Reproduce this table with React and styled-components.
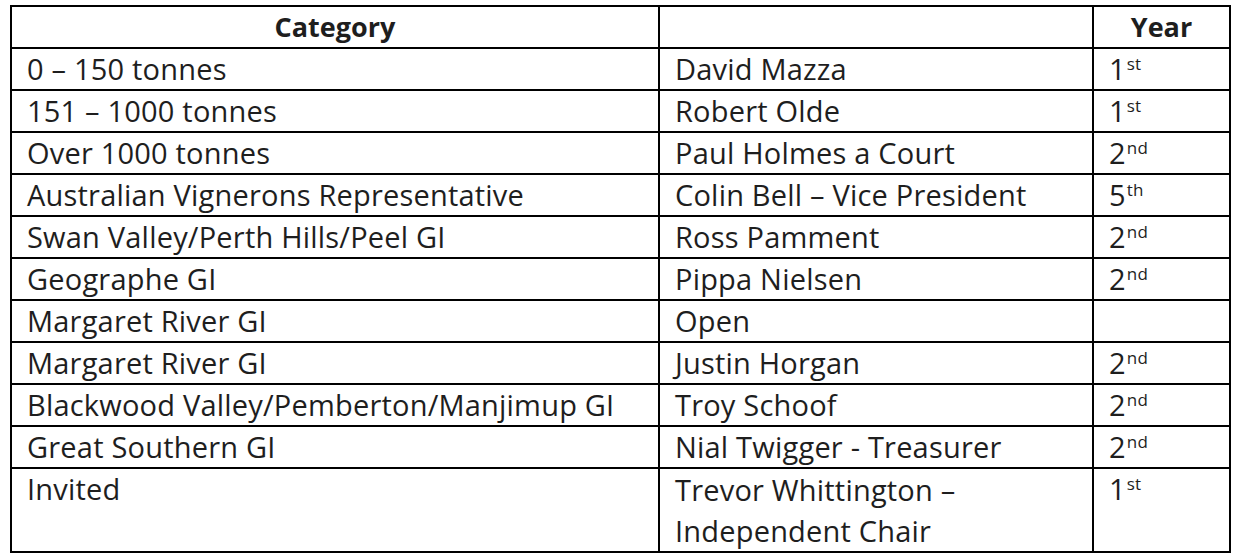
import React from 'react'
import styled, { createGlobalStyle } from 'styled-components'

const GlobalStyle = createGlobalStyle`
  html, body {
    margin: 0;
    padding: 0;
    background: #ffffff;
  }
  body {
    font-family: "Open Sans", Lato, sans-serif;
    color: #1e1e1e;
  }
`

const rows = [
  { category: '0 – 150 tonnes', name: 'David Mazza', year: '1', suffix: 'st' },
  { category: '151 – 1000 tonnes', name: 'Robert Olde', year: '1', suffix: 'st' },
  { category: 'Over 1000 tonnes', name: 'Paul Holmes a Court', year: '2', suffix: 'nd' },
  { category: 'Australian Vignerons Representative', name: 'Colin Bell – Vice President', year: '5', suffix: 'th' },
  { category: 'Swan Valley/Perth Hills/Peel GI', name: 'Ross Pamment', year: '2', suffix: 'nd' },
  { category: 'Geographe GI', name: 'Pippa Nielsen', year: '2', suffix: 'nd' },
  { category: 'Margaret River GI', name: 'Open', year: '', suffix: '' },
  { category: 'Margaret River GI', name: 'Justin Horgan', year: '2', suffix: 'nd' },
  { category: 'Blackwood Valley/Pemberton/Manjimup GI', name: 'Troy Schoof', year: '2', suffix: 'nd' },
  { category: 'Great Southern GI', name: 'Nial Twigger - Treasurer', year: '2', suffix: 'nd' },
]

const App = () => {
  return (
    <Page>
      <GlobalStyle />
      <Table>
        <colgroup>
          <col style={{ width: 648 }} />
          <col style={{ width: 434 }} />
          <col style={{ width: 137 }} />
        </colgroup>
        <thead>
          <tr>
            <Head>Category</Head>
            <Head />
            <Head>Year</Head>
          </tr>
        </thead>
        <tbody>
          {rows.map((row, i) => (
            <tr key={i}>
              <Cell>{row.category}</Cell>
              <Cell>{row.name}</Cell>
              <Cell>
                {row.year}
                {row.suffix && <Sup>{row.suffix}</Sup>}
              </Cell>
            </tr>
          ))}
          <tr>
            <Cell>Invited</Cell>
            <Cell $tall>
              Trevor Whittington –<br />
              Independent Chair
            </Cell>
            <Cell>
              1<Sup>st</Sup>
            </Cell>
          </tr>
        </tbody>
      </Table>
    </Page>
  )
}

export default App

const Page = styled.div`
  padding: 5px 10px;
`

const Table = styled.table`
  width: 1219px;
  table-layout: fixed;
  border-collapse: collapse;
  border: 2px solid #000;
`

const Head = styled.th`
  border: 2px solid #000;
  height: 40px;
  padding: 0;
  text-align: center;
  font-size: 27px;
  font-weight: 700;
  line-height: 40px;
  vertical-align: top;
`

const Cell = styled.td`
  border: 2px solid #000;
  height: 40px;
  padding: 0 15px;
  font-size: 29px;
  letter-spacing: 0.2px;
  line-height: ${({ $tall }) => ($tall ? '41px' : '40px')};
  vertical-align: top;
  white-space: nowrap;
`

const Sup = styled.sup`
  font-size: 17px;
  line-height: 0;
  vertical-align: 10px;
  margin-left: 1px;
`
